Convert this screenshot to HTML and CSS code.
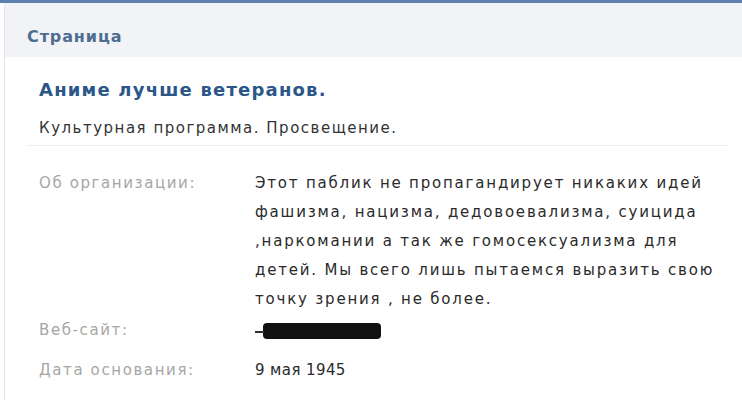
FILE: index.html
```html
<!DOCTYPE html>
<html lang="ru">
<head>
    <meta charset="UTF-8">
    <title>Страница</title>
    <link rel="stylesheet" href="styles.css">
</head>
<body>
    <div class="page">
        <div class="page-header">Страница</div>

        <div class="page-body">
            <div class="group-top">
                <h1 class="group-name">Аниме лучше ветеранов.</h1>
                <div class="group-status">Культурная программа. Просвещение.</div>
            </div>

            <div class="info">
                <div class="info-row">
                    <div class="info-label">Об организации:</div>
                    <div class="info-value">Этот паблик не пропагандирует никаких идей фашизма, нацизма, дедовоевализма, суицида ,наркомании а так же гомосексуализма для детей. Мы всего лишь пытаемся выразить свою точку зрения , не более.</div>
                </div>
                <div class="info-row">
                    <div class="info-label">Веб-сайт:</div>
                    <div class="info-value"><span class="hidden-link"></span></div>
                </div>
                <div class="info-row">
                    <div class="info-label">Дата основания:</div>
                    <div class="info-value info-date">9 мая 1945</div>
                </div>
            </div>
        </div>
    </div>
</body>
</html>
```

FILE: styles.css
```css
* {
    margin: 0;
    padding: 0;
    box-sizing: border-box;
}

body {
    font-family: 'DejaVu Sans', sans-serif;
    background-color: #fff;
    border-top: 3px solid #5d80ac;
}

.page {
    margin-left: 4px;
    border-left: 1px solid #e4e6ea;
    min-height: 397px;
}

.page-header {
    background-color: #f2f3f6;
    height: 54px;
    padding: 24px 0 0 22px;
    font-size: 16px;
    line-height: 19px;
    font-weight: bold;
    letter-spacing: 0.9px;
    color: #4d6d91;
}

.page-body {
    padding: 0 13px 0 22px;
}

.group-top {
    padding: 22px 0 8px 12px;
    border-bottom: 1px solid #ececec;
}

.group-name {
    font-size: 18px;
    line-height: 22px;
    font-weight: bold;
    letter-spacing: 1.2px;
    color: #2b5788;
}

.group-status {
    margin-top: 18px;
    font-size: 15px;
    line-height: 18px;
    letter-spacing: 1.5px;
    color: #333;
}

.info {
    padding: 23px 0 0 12px;
}

.info-row {
    display: flex;
    font-size: 15px;
    line-height: 29px;
    letter-spacing: 1.6px;
    margin-bottom: 11px;
}

.info-row:first-child {
    margin-bottom: 2px;
}

.info-label {
    width: 216px;
    flex-shrink: 0;
    color: #a6a6a6;
}

.info-value {
    width: 470px;
    letter-spacing: 1.8px;
    color: #2a2a2a;
}

.info-date {
    letter-spacing: 0.4px;
}

.hidden-link {
    display: inline-block;
    position: relative;
    width: 118px;
    height: 16px;
    margin-left: 8px;
    vertical-align: middle;
    background-color: #111;
    border-radius: 4px;
}

.hidden-link::before {
    content: "";
    position: absolute;
    left: -8px;
    top: 8px;
    width: 9px;
    height: 2px;
    background-color: #333;
}
```
